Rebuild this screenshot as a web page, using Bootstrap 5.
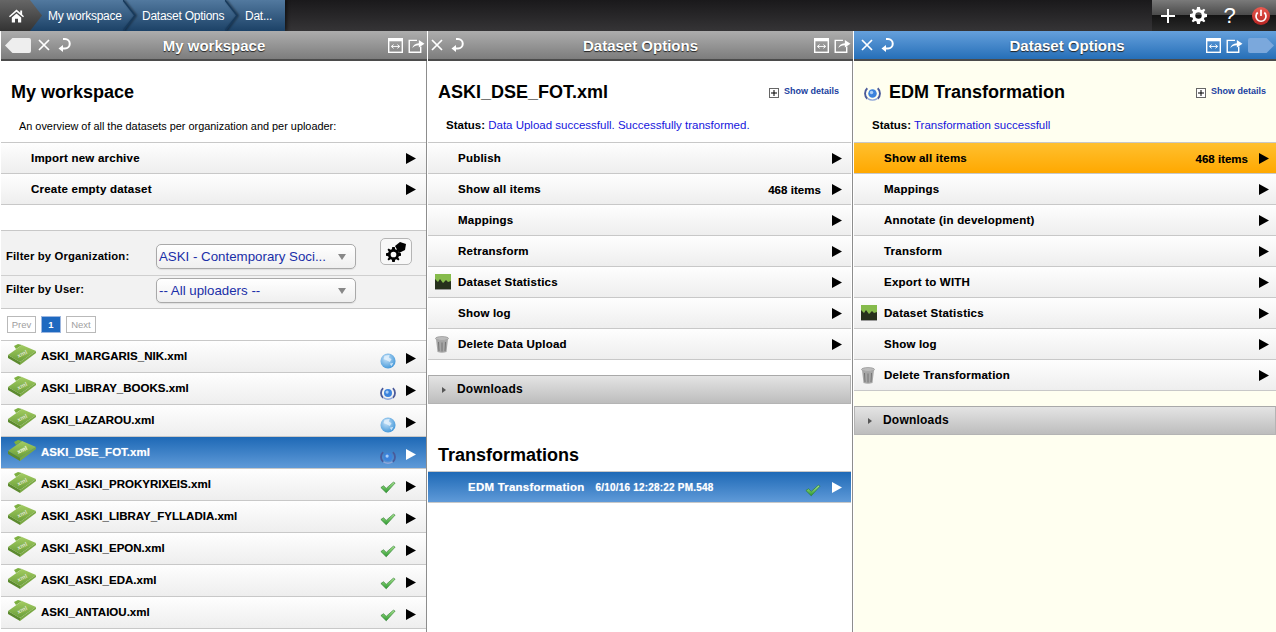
<!DOCTYPE html>
<html lang="en">
<head>
<meta charset="utf-8">
<title>Workspace</title>
<link rel="stylesheet" href="https://cdn.jsdelivr.net/npm/bootstrap@5.3.0/dist/css/bootstrap.min.css">
<style>
html,body{height:100%;overflow:hidden}
body{font-family:"Liberation Sans",Arial,sans-serif;font-size:12px;color:#000;background:#fff}
.topbar{height:31px;background:linear-gradient(#1a191b,#353436)}
.crumbs{height:31px;width:285px;background:linear-gradient(#52799f,#1c4267);box-shadow:2px 0 3px rgba(0,0,0,.5)}
.crumb{position:relative;height:31px;display:flex;align-items:center;color:#fff;font-size:12px;letter-spacing:-.25px;flex:none}
.crumb-home{width:42px;background:linear-gradient(#666,#333);padding-left:9px;clip-path:polygon(0 0,30px 0,42px 15.5px,30px 31px,0 31px)}
.crumb-a{width:94px;padding-left:6px}
.crumb-b{width:102px;padding-left:6px}
.crumb-c{width:47px;padding-left:7px}
.chev{position:absolute;right:0;top:0;width:13px;height:31px;filter:drop-shadow(1px 0 1px rgba(0,0,0,.6))}
.toolblock{width:124px;height:31px;background:linear-gradient(#7a7a7a 0,#4b4b4b 48%,#141414 50%,#2a2a2a 100%)}
.toolbtn{width:32px;height:31px;display:flex;align-items:center;justify-content:center;color:#fff;font-size:22px;line-height:1}
.panels{height:601px}
.panelbox{display:flex;flex-direction:column;flex:none;height:601px;position:relative}
.p1{width:425px;margin-left:1px;margin-right:2px}
.p2{width:423px;margin-right:3px}
.p3{width:422px;background:#fffff0}
.divider{position:absolute;top:2px;width:1px;height:100%;background:#8d8d8d}
.p1 .divider{right:-1px}
.p2 .divider{right:-2px}
.headbar{height:30px;flex:none;display:flex;align-items:center;border-bottom:2px solid #4b4b4b;background:linear-gradient(#adadad,#7d7d7d);position:relative;padding:0 2px 0 3px}
.p1 .headbar{margin-right:-1px;padding-left:4px}
.p2 .headbar{margin-right:-2px;padding-right:2px}
.headbar.blue{background:linear-gradient(#65a0dc,#266fb8);padding-right:2px}
.headtitle{position:absolute;left:0;right:0;top:0;line-height:30px;text-align:center;color:#fff;font-weight:700;font-size:15px;text-shadow:0 1px 1px #222;pointer-events:none}
.blue .headtitle{left:4px}
.closeicon{margin-left:7px}
.undoicon{margin-left:7px}
.sidebtns{margin-left:auto;display:flex;align-items:center;gap:5px}
.panelhead{padding:0 10px;height:81px;position:relative;flex:none}
.paneltitle{font-size:18px;font-weight:700;line-height:22px;margin:0;padding-top:20px}
.paneltext{font-size:10.9px;line-height:15px;padding:16px 0 0 8px;margin:0}
.statusline{font-size:11.5px;padding-top:15px}
.statuslabel{font-weight:700}
.statusval{color:#1515dd}
.detaillink{position:absolute;top:24px;right:12px;color:#1a3fa0;font-size:9px;font-weight:700;display:flex;align-items:center;gap:5px;text-decoration:none}
.p3 .detaillink{right:10px}
.plusbox{width:10px;height:10px;border:1px solid #666;background:#fff;position:relative;display:block;margin-top:2px}
.plusbox::before{content:"";position:absolute;left:1px;right:1px;top:3px;height:2px;background:#000;transform:scaleY(.5)}
.plusbox::after{content:"";position:absolute;top:1px;bottom:1px;left:3px;width:2px;background:#000;transform:scaleX(.5)}
.rowlist{border-radius:0;--bs-list-group-bg:transparent;--bs-list-group-border-width:0;flex:none}
.rowitem{height:31px;display:flex;align-items:center;padding:1px 0 0 30px;position:relative;border:0;border-bottom:1px solid #c8c8c8;background:linear-gradient(#fefefe,#eeeeee);font-weight:700;font-size:11.5px;letter-spacing:.22px;color:#000;text-shadow:0 0 .4px rgba(0,0,0,.35)}
.rowlist .rowitem:first-child{border-top:1px solid #c8c8c8;height:32px}
.rowitem .arrow{position:absolute;right:10px;top:50%;margin-top:-5px;width:10px;height:11px}
.p2 .rowitem .arrow{right:9px}
.p3 .rowitem .arrow{right:7px}
.rowitem .count{position:absolute;right:30px;top:8px;letter-spacing:.05px}
.p3 .rowitem .count{right:28px;letter-spacing:0}
.rowitem .lefticon{position:absolute;left:7px;top:7px}
.rowitem.current{background:linear-gradient(#1e69b6,#5f9ad8);color:#fff;text-shadow:0 0 1px rgba(255,255,255,.5)}
.rowitem.amber{background:linear-gradient(#ffc02f,#ffa800);border:0;border-top:1px solid #c8c8c8;border-bottom:1px solid #c8c8c8}
.rowitem.filename{padding:0 0 0 40px;letter-spacing:.02px}
.rowitem.filename .lefticon{left:6px;top:3px}
.rowitem.filename .arrow{margin-top:-4px}
.rowitem.transf{padding-left:40px}
.rowitem .stateicon{position:absolute;right:30px;top:12px}
.filterzone{background:#f2f2f2;border-top:1px solid #c8c8c8;border-bottom:1px solid #c8c8c8;flex:none;margin-top:25px;position:relative}
.filterrow{display:flex;align-items:center;height:32px;padding:0 0 4px 5px;font-weight:700;font-size:11.3px;letter-spacing:.15px}
.filterrow .lab{width:150px;flex:none;margin-bottom:2px}
.filterrow.upper{height:45px;border-bottom:1px solid #cfcfcf;padding:7px 0 0 5px}
.filterrow.upper .lab{margin-bottom:0}
.fakeselect{width:200px;height:25px;border:1px solid #a9a9a9;border-radius:5px;background:linear-gradient(#fff,#efefef);color:#1a2fa8;font-weight:400;font-size:13.3px;letter-spacing:0;padding:1px 0 0 2px;display:flex;align-items:center;position:relative;box-shadow:0 1px 1px rgba(0,0,0,.08);line-height:1}
.fakeselect::after{content:"";position:absolute;right:9px;top:9px;border:4px solid transparent;border-top:6px solid #888;border-bottom:0}
.tagbtn{position:absolute;left:379px;top:7px;width:32px;height:27px;border:1px solid #b5b5b5;border-radius:5px;background:#f8f8f8;display:flex;align-items:center;justify-content:center;padding:0}
.pagerzone{height:31px;display:flex;align-items:center;gap:5px;padding:0 0 0 6px;flex:none}
.pagerbtn{height:17px;width:29px;text-align:center;border:1px solid #b9b9b9;color:#a0a0a0;line-height:15px;background:#fff;font-size:9.5px}
.pagerbtn.on{background:#1e69c0;color:#fff;border-color:#9db7e0;font-weight:700;width:20px}
.pagerbtn.last{width:30px}
.filelist{flex:1;overflow:hidden}
.filelist .rowitem{height:32px}
.filelist .rowitem:first-child{border-top:1px solid #c8c8c8;height:33px}
.dropbar{height:29px;margin-top:15px;background:linear-gradient(#e4e4e4,#bdbdbd);border:1px solid #b4b4b4;border-top:1px solid #a9a9a9;display:flex;align-items:center;padding:0 0 1px 9px;font-weight:700;font-size:12px;letter-spacing:.2px;gap:11px;flex:none}
.dropbar::before{content:"";border:3px solid transparent;border-left:4px solid #555;border-right:0;margin-top:2px;margin-left:4px}
.subhead{font-size:18px;font-weight:700;line-height:22px;margin:40px 0 5px 10px;flex:none}
.stamp{font-size:10px;margin-left:11px;letter-spacing:.2px}
</style>
</head>
<body>
<svg width="0" height="0" class="position-absolute">
<defs>
<linearGradient id="gb" x1="0" y1="0" x2="0" y2="1"><stop offset="0" stop-color="#a3cc62"/><stop offset="1" stop-color="#6a9e38"/></linearGradient>
<radialGradient id="gg" cx=".4" cy=".35" r=".7"><stop offset="0" stop-color="#c6e2f8"/><stop offset="1" stop-color="#3f95d8"/></radialGradient>
<linearGradient id="gc" x1="0" y1="0" x2="0" y2="1"><stop offset="0" stop-color="#a9e58e"/><stop offset="1" stop-color="#2b9a2f"/></linearGradient>
<linearGradient id="gp" x1="0" y1="0" x2="0" y2="1"><stop offset="0" stop-color="#ea5a50"/><stop offset="1" stop-color="#b82422"/></linearGradient>
<symbol id="book" viewBox="0 0 30 22">
<path d="M1 11 L15 1 L29 7 L13 18 Z" fill="url(#gb)"/>
<path d="M1 11 L13 18 L13 21 L1 14 Z" fill="#5c8a2e"/><path d="M13 18 L29 7 L29 9 L13 21Z" fill="#7aa844"/>
<path d="M7 2 L11 0 L15 1 L9 5Z" fill="#7db040"/>
<text x="10" y="12" font-family="Liberation Sans,sans-serif" font-size="6" fill="#e6f3d0" transform="rotate(-25 15 10)">xml</text>
</symbol>
<symbol id="globe" viewBox="0 0 18 18">
<circle cx="9" cy="9" r="8.5" fill="url(#gg)"/>
<path d="M5 3 L11 2 L10 5 L13 7 L11 10 L7 8 L4 7Z M11 12 L15 11 L13 15Z" fill="#e9f4fd" opacity=".75"/>
</symbol>
<symbol id="wave" viewBox="0 0 18 18">
<circle cx="9" cy="9" r="4.5" fill="#3b82dc"/><circle cx="8" cy="8" r="1.8" fill="#a9cdf5"/>
<path d="M3.5 3.5 A7.5 7.5 0 0 0 3.5 14.5 M14.5 3.5 A7.5 7.5 0 0 1 14.5 14.5" fill="none" stroke="#4a5a9a" stroke-width="2"/>
<path d="M4 14.5 Q9 17.5 14 14.5" fill="none" stroke="#8fa6d8" stroke-width="1.5"/>
</symbol>
<symbol id="tick" viewBox="0 0 18 14">
<path d="M1 7 L4 5 L7 8 L15 1 L17 2 L7 13 Z" fill="url(#gc)" stroke="#2a7a2c" stroke-width=".7"/>
</symbol>
<symbol id="tri" viewBox="0 0 10 11"><path d="M0 0 L10 5.5 L0 11Z"/></symbol>
<symbol id="chart" viewBox="0 0 16 16">
<rect x="0" y="0" width="16" height="15" fill="#86bb4c"/>
<path d="M0 5 L3 8 L5 5 L8 9 L11 6 L13 8 L16 7 V15 H0Z" fill="#26301c"/>
<rect x="0" y="15" width="16" height="1" fill="#9a9a9a"/>
</symbol>
<symbol id="trash" viewBox="0 0 14 17">
<ellipse cx="7" cy="2.5" rx="6.5" ry="2" fill="#bbb" stroke="#888" stroke-width=".6"/>
<path d="M1 3 L2.5 16 Q7 17.5 11.5 16 L13 3 Q7 6 1 3Z" fill="#a6a6a6"/>
<path d="M3.5 6 L4 15 M7 6.5 V15.5 M10.5 6 L10 15" stroke="#6f6f6f" stroke-width=".9"/>
</symbol>
<symbol id="house" viewBox="0 0 16 16">
<path d="M8 1 L12 4.6 V2 H14 V6.4 L16 8.2 L15 9.4 L8 3.4 L1 9.4 L0 8.2Z M3 9.6 L8 5.2 L13 9.6 V15 H9.6 V11 H6.4 V15 H3Z" fill="#fff"/>
</symbol>
<symbol id="cog" viewBox="0 0 18 18">
<path fill-rule="evenodd" d="M7.5 0 H10.5 L11 2.6 L12.6 3.3 L14.8 1.8 L16.2 3.2 L14.7 5.4 L15.4 7 L18 7.5 V10.5 L15.4 11 L14.7 12.6 L16.2 14.8 L14.8 16.2 L12.6 14.7 L11 15.4 L10.5 18 H7.5 L7 15.4 L5.4 14.7 L3.2 16.2 L1.8 14.8 L3.3 12.6 L2.6 11 L0 10.5 V7.5 L2.6 7 L3.3 5.4 L1.8 3.2 L3.2 1.8 L5.4 3.3 L7 2.6Z M9 5.6 A3.4 3.4 0 1 0 9 12.4 A3.4 3.4 0 1 0 9 5.6Z"/>
</symbol>
<symbol id="tagleft" viewBox="0 0 28 16"><path d="M8 0 H26 Q28 0 28 2 V14 Q28 16 26 16 H8 L0 8Z"/></symbol>
<symbol id="tagright" viewBox="0 0 28 16"><path d="M20 0 H2 Q0 0 0 2 V14 Q0 16 2 16 H20 L28 8Z"/></symbol>
<symbol id="closex" viewBox="0 0 12 12"><path d="M1 1 L11 11 M11 1 L1 11" stroke="#fff" stroke-width="1.7" fill="none"/></symbol>
<symbol id="undo" viewBox="0 0 14 14"><path d="M6 1 H8 A4.6 4.6 0 0 1 8 10.5 H5" stroke="#fff" stroke-width="2" fill="none"/><path d="M6 7 L1.5 10.5 L6 14Z" fill="#fff"/></symbol>
<symbol id="fitw" viewBox="0 0 16 16"><rect x=".75" y=".75" width="14.5" height="14.5" fill="none" stroke="#fff" stroke-width="1.5"/><rect x="1" y="1" width="14" height="2.5" fill="#fff"/><path d="M4 9 H12 M6 7 L3.5 9 L6 11 M10 7 L12.5 9 L10 11" stroke="#fff" stroke-width="1" fill="none"/></symbol>
<symbol id="popout" viewBox="0 0 17 16"><path d="M9 2.5 H.75 V15.25 H13 V9" fill="none" stroke="#fff" stroke-width="1.5"/><path d="M4 11 Q5 6 11 5.5 V2 L17 6 L11 10 V7.8 Q6 8 4 11Z" fill="#fff"/></symbol>
<symbol id="chevron" viewBox="0 0 13 31"><path d="M0 0 L12 15.5 L0 31" fill="none" stroke="#173a5c" stroke-width="1.5"/></symbol>
</defs>
</svg>

<nav class="topbar d-flex justify-content-between">
  <div class="crumbs d-flex position-relative">
    <div class="crumb crumb-home"><svg width="15" height="16"><use href="#house"/></svg></div>
    <div class="crumb crumb-a"><span>My workspace</span><svg class="chev"><use href="#chevron"/></svg></div>
    <div class="crumb crumb-b"><span>Dataset Options</span><svg class="chev"><use href="#chevron"/></svg></div>
    <div class="crumb crumb-c"><span>Dat...</span></div>
  </div>
  <div class="toolblock d-flex">
    <div class="toolbtn"><svg width="14" height="14" viewBox="0 0 14 14"><path d="M7 0 V14 M0 7 H14" stroke="#fff" stroke-width="2"/></svg></div>
    <div class="toolbtn"><svg width="17" height="17" fill="#fff"><use href="#cog"/></svg></div>
    <div class="toolbtn">?</div>
    <div class="toolbtn"><svg width="18" height="18" viewBox="0 0 18 18"><circle cx="9" cy="9" r="9" fill="url(#gp)"/><path d="M5.7 5.5 A5 5 0 1 0 12.3 5.5 M9 2.8 V9" fill="none" stroke="#fff" stroke-width="1.7"/></svg></div>
  </div>
</nav>

<div class="panels d-flex">
  <section class="panelbox p1">
    <div class="divider"></div>
    <header class="headbar">
      <svg width="26" height="15" fill="#eee"><use href="#tagleft"/></svg>
      <svg class="closeicon" width="12" height="12"><use href="#closex"/></svg>
      <svg class="undoicon" width="14" height="14"><use href="#undo"/></svg>
      <div class="headtitle">My workspace</div>
      <div class="sidebtns">
        <svg width="15" height="15"><use href="#fitw"/></svg><svg width="17" height="15"><use href="#popout"/></svg>
      </div>
    </header>
    <div class="panelhead">
      <h1 class="paneltitle">My workspace</h1>
      <p class="paneltext">An overview of all the datasets per organization and per uploader:</p>
    </div>
    <div class="list-group rowlist">
      <div class="rowitem">Import new archive<svg class="arrow"><use href="#tri"/></svg></div>
      <div class="rowitem">Create empty dataset<svg class="arrow"><use href="#tri"/></svg></div>
    </div>
    <div class="filterzone">
      <div class="filterrow upper"><span class="lab">Filter by Organization:</span><span class="fakeselect">ASKI - Contemporary Soci...</span></div>
      <div class="filterrow"><span class="lab">Filter by User:</span><span class="fakeselect">-- All uploaders --</span></div>
      <button type="button" class="tagbtn" aria-label="Tag settings"><svg width="24" height="22" viewBox="0 0 24 22"><path d="M11 5 L16 1 L22 3 L21 9 L15 12Z"/><svg x="2" y="6" width="15" height="15"><use href="#cog"/></svg></svg></button>
    </div>
    <div class="pagerzone"><span class="pagerbtn">Prev</span><span class="pagerbtn on">1</span><span class="pagerbtn last">Next</span></div>
    <div class="list-group rowlist filelist">
      <div class="rowitem filename"><svg class="lefticon" width="30" height="22"><use href="#book"/></svg>ASKI_MARGARIS_NIK.xml<svg class="stateicon" width="16" height="16"><use href="#globe"/></svg><svg class="arrow"><use href="#tri"/></svg></div>
      <div class="rowitem filename"><svg class="lefticon" width="30" height="22"><use href="#book"/></svg>ASKI_LIBRAY_BOOKS.xml<svg class="stateicon" width="16" height="16"><use href="#wave"/></svg><svg class="arrow"><use href="#tri"/></svg></div>
      <div class="rowitem filename"><svg class="lefticon" width="30" height="22"><use href="#book"/></svg>ASKI_LAZAROU.xml<svg class="stateicon" width="16" height="16"><use href="#globe"/></svg><svg class="arrow"><use href="#tri"/></svg></div>
      <div class="rowitem filename current"><svg class="lefticon" width="30" height="22"><use href="#book"/></svg>ASKI_DSE_FOT.xml<svg class="stateicon" width="16" height="16"><use href="#wave"/></svg><svg class="arrow" fill="#fff"><use href="#tri"/></svg></div>
      <div class="rowitem filename"><svg class="lefticon" width="30" height="22"><use href="#book"/></svg>ASKI_ASKI_PROKYRIXEIS.xml<svg class="stateicon" width="16" height="13"><use href="#tick"/></svg><svg class="arrow"><use href="#tri"/></svg></div>
      <div class="rowitem filename"><svg class="lefticon" width="30" height="22"><use href="#book"/></svg>ASKI_ASKI_LIBRAY_FYLLADIA.xml<svg class="stateicon" width="16" height="13"><use href="#tick"/></svg><svg class="arrow"><use href="#tri"/></svg></div>
      <div class="rowitem filename"><svg class="lefticon" width="30" height="22"><use href="#book"/></svg>ASKI_ASKI_EPON.xml<svg class="stateicon" width="16" height="13"><use href="#tick"/></svg><svg class="arrow"><use href="#tri"/></svg></div>
      <div class="rowitem filename"><svg class="lefticon" width="30" height="22"><use href="#book"/></svg>ASKI_ASKI_EDA.xml<svg class="stateicon" width="16" height="13"><use href="#tick"/></svg><svg class="arrow"><use href="#tri"/></svg></div>
      <div class="rowitem filename"><svg class="lefticon" width="30" height="22"><use href="#book"/></svg>ASKI_ANTAIOU.xml<svg class="stateicon" width="16" height="13"><use href="#tick"/></svg><svg class="arrow"><use href="#tri"/></svg></div>
    </div>
  </section>

  <section class="panelbox p2">
    <div class="divider"></div>
    <header class="headbar">
      <svg width="12" height="12"><use href="#closex"/></svg>
      <svg class="undoicon" width="14" height="14"><use href="#undo"/></svg>
      <div class="headtitle">Dataset Options</div>
      <div class="sidebtns">
        <svg width="15" height="15"><use href="#fitw"/></svg><svg width="17" height="15"><use href="#popout"/></svg>
      </div>
    </header>
    <div class="panelhead">
      <h1 class="paneltitle">ASKI_DSE_FOT.xml</h1>
      <p class="paneltext statusline"><span class="statuslabel">Status:</span> <span class="statusval">Data Upload successfull. Successfully transformed.</span></p>
      <a class="detaillink" href="#"><span class="plusbox"></span>Show details</a>
    </div>
    <div class="list-group rowlist">
      <div class="rowitem">Publish<svg class="arrow"><use href="#tri"/></svg></div>
      <div class="rowitem">Show all items<span class="count">468 items</span><svg class="arrow"><use href="#tri"/></svg></div>
      <div class="rowitem">Mappings<svg class="arrow"><use href="#tri"/></svg></div>
      <div class="rowitem">Retransform<svg class="arrow"><use href="#tri"/></svg></div>
      <div class="rowitem"><svg class="lefticon" width="16" height="16"><use href="#chart"/></svg>Dataset Statistics<svg class="arrow"><use href="#tri"/></svg></div>
      <div class="rowitem">Show log<svg class="arrow"><use href="#tri"/></svg></div>
      <div class="rowitem"><svg class="lefticon" width="14" height="17"><use href="#trash"/></svg>Delete Data Upload<svg class="arrow"><use href="#tri"/></svg></div>
    </div>
    <div class="dropbar">Downloads</div>
    <h2 class="subhead">Transformations</h2>
    <div class="list-group rowlist">
      <div class="rowitem current transf">EDM Transformation<span class="stamp">6/10/16 12:28:22 PM.548</span><svg class="stateicon" width="16" height="13"><use href="#tick"/></svg><svg class="arrow" fill="#fff"><use href="#tri"/></svg></div>
    </div>
  </section>

  <section class="panelbox p3">
    <header class="headbar blue">
      <svg width="12" height="12" class="ms-1"><use href="#closex"/></svg>
      <svg class="undoicon" width="14" height="14"><use href="#undo"/></svg>
      <div class="headtitle">Dataset Options</div>
      <div class="sidebtns">
        <svg width="15" height="15"><use href="#fitw"/></svg><svg width="17" height="15"><use href="#popout"/></svg><svg width="26" height="15" fill="#7ba8dc"><use href="#tagright"/></svg>
      </div>
    </header>
    <div class="panelhead">
      <h1 class="paneltitle"><svg class="me-2" width="17" height="17"><use href="#wave"/></svg>EDM Transformation</h1>
      <p class="paneltext statusline"><span class="statuslabel">Status:</span> <span class="statusval">Transformation successfull</span></p>
      <a class="detaillink" href="#"><span class="plusbox"></span>Show details</a>
    </div>
    <div class="list-group rowlist">
      <div class="rowitem amber">Show all items<span class="count">468 items</span><svg class="arrow"><use href="#tri"/></svg></div>
      <div class="rowitem">Mappings<svg class="arrow"><use href="#tri"/></svg></div>
      <div class="rowitem">Annotate (in development)<svg class="arrow"><use href="#tri"/></svg></div>
      <div class="rowitem">Transform<svg class="arrow"><use href="#tri"/></svg></div>
      <div class="rowitem">Export to WITH<svg class="arrow"><use href="#tri"/></svg></div>
      <div class="rowitem"><svg class="lefticon" width="16" height="16"><use href="#chart"/></svg>Dataset Statistics<svg class="arrow"><use href="#tri"/></svg></div>
      <div class="rowitem">Show log<svg class="arrow"><use href="#tri"/></svg></div>
      <div class="rowitem"><svg class="lefticon" width="14" height="17"><use href="#trash"/></svg>Delete Transformation<svg class="arrow"><use href="#tri"/></svg></div>
    </div>
    <div class="dropbar">Downloads</div>
  </section>
</div>
<script src="https://cdn.jsdelivr.net/npm/bootstrap@5.3.0/dist/js/bootstrap.bundle.min.js"></script>
</body>
</html>
